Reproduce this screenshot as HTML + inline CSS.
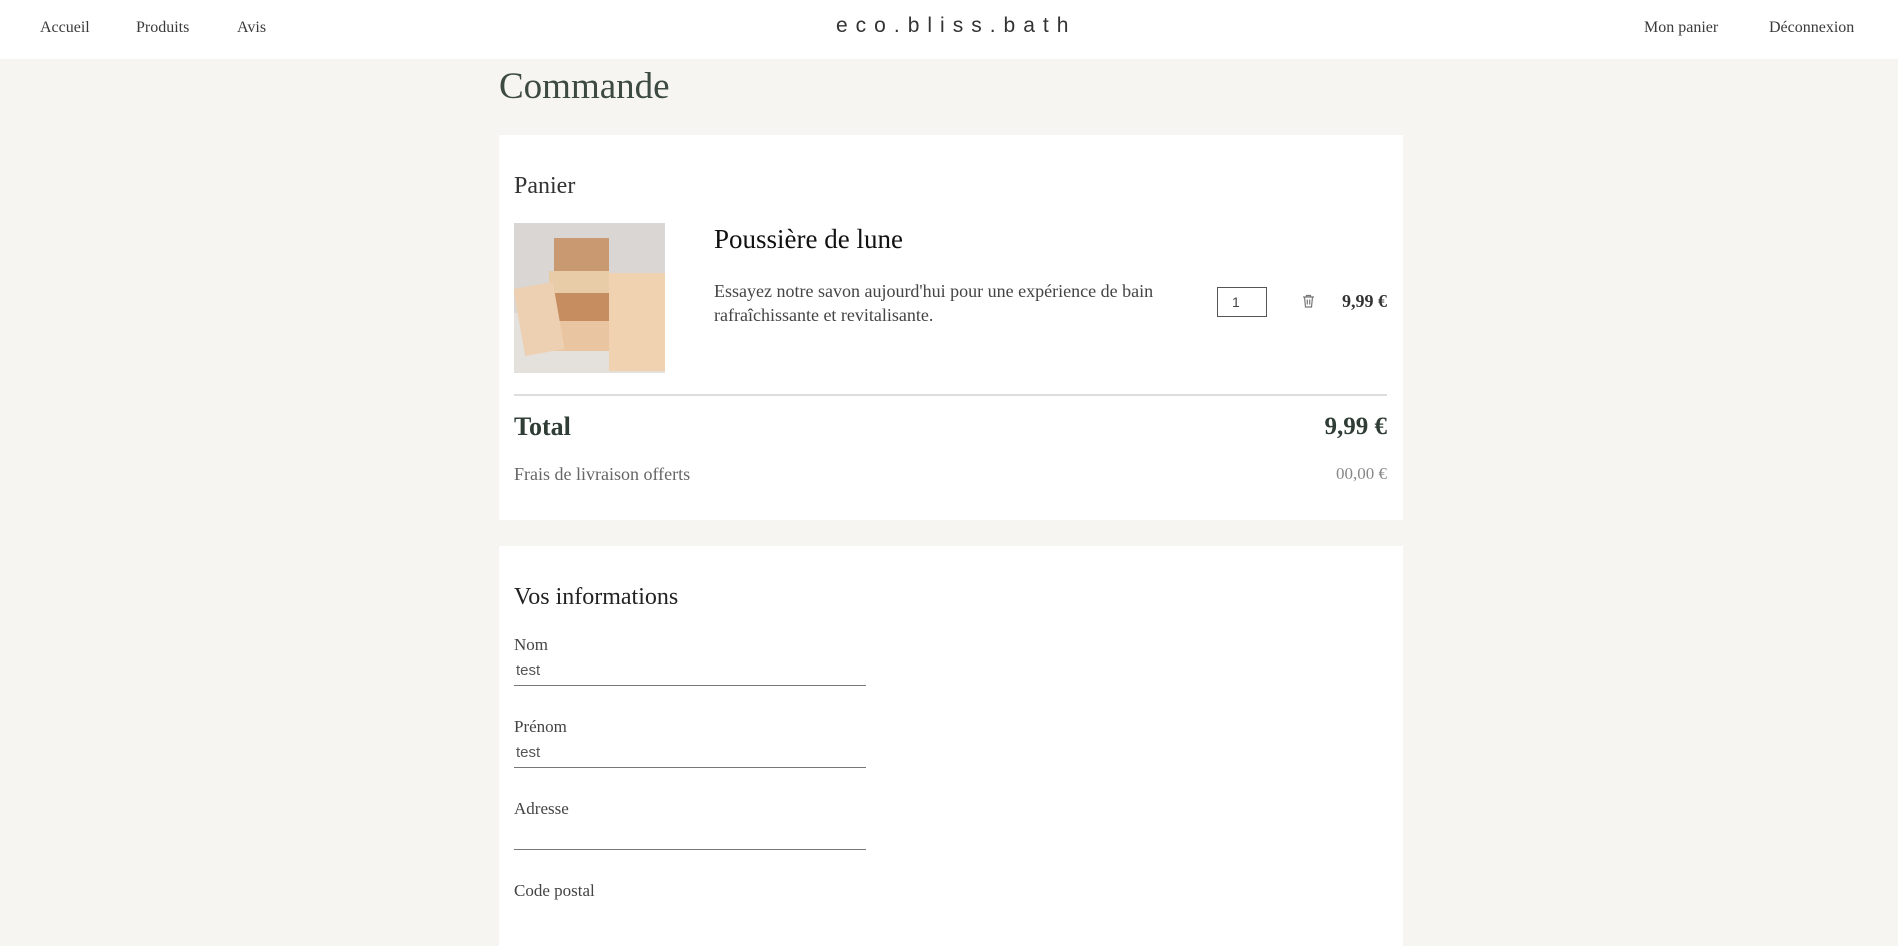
<!DOCTYPE html>
<html><head><meta charset="utf-8"><style>
*{margin:0;padding:0;box-sizing:border-box}
body{width:1898px;height:923px;overflow:hidden;background:#f7f5f2;font-family:"Liberation Serif",serif;color:#333;position:relative}
.a{position:absolute;white-space:nowrap;line-height:1}
header{position:absolute;left:0;top:0;width:1898px;height:59px;background:#fff}
.nav{font-size:16px;color:#3a3a3a;top:20px}
.card{position:absolute;left:499px;width:904px;background:#fff}
.lbl{font-size:17px;color:#444}
.val{font-family:"Liberation Sans",sans-serif;font-size:15px;color:#555}
.line{position:absolute;left:514px;width:352px;height:1px;background:#777}
</style></head><body>
<header>
<div class="a nav" style="left:40px">Accueil</div>
<div class="a nav" style="left:136px">Produits</div>
<div class="a nav" style="left:237px">Avis</div>
<div class="a" style="left:836px;top:15px;font-family:'Liberation Sans',sans-serif;font-size:21px;letter-spacing:8px;color:#333;font-weight:300">eco.bliss.bath</div>
<div class="a nav" style="left:1644px">Mon panier</div>
<div class="a nav" style="left:1769px">Déconnexion</div>
</header>
<div class="a" style="left:499px;top:68px;font-size:37px;color:#3c4a42">Commande</div>
<div class="card" style="top:135px;height:385px"></div>
<div class="a" style="left:514px;top:174px;font-size:24px;color:#333">Panier</div>
<svg class="a" style="left:514px;top:223px" width="151" height="150" viewBox="0 0 151 150">
<rect width="151" height="150" fill="#d9d6d3"/>
<rect x="0" y="90" width="151" height="60" fill="#e4e0dc"/>
<rect x="40" y="15" width="55" height="36" fill="#c99a72"/>
<rect x="35" y="48" width="60" height="28" fill="#e8cba7"/>
<rect x="30" y="70" width="68" height="32" fill="#c58d60"/>
<rect x="36" y="98" width="62" height="30" fill="#e9c5a1"/>
<rect x="5" y="62" width="40" height="68" fill="#edd0b2" transform="rotate(-10 25 96)"/>
<rect x="95" y="50" width="56" height="98" fill="#f0d2b0"/>
</svg>
<div class="a" style="left:714px;top:226px;font-size:27px;color:#111">Poussière de lune</div>
<div class="a" style="left:714px;top:279px;font-size:18px;color:#444;line-height:24px">Essayez notre savon aujourd'hui pour une expérience de bain<br>rafraîchissante et revitalisante.</div>
<div class="a" style="left:1217px;top:287px;width:50px;height:30px;border:1px solid #555;font-family:'Liberation Sans',sans-serif;font-size:14px;padding:7px 0 0 14px;color:#444">1</div>
<svg class="a" style="left:1302px;top:294px" width="13" height="14" viewBox="0 0 13 14" fill="none" stroke="#777" stroke-width="1.2"><path d="M1 3h11M4.5 3V1.5h4V3M2.5 3l1 10h6l1-10M5.3 5.5v5M7.7 5.5v5"/></svg>
<div class="a" style="right:511px;top:292px;font-size:18px;color:#333;font-weight:bold">9,99 €</div>
<div class="a" style="left:514px;top:394px;width:873px;height:2px;background:#ddd"></div>
<div class="a" style="left:514px;top:414px;font-size:26px;color:#2f3d36;font-weight:bold">Total</div>
<div class="a" style="right:511px;top:414px;font-size:25px;color:#2f3d36;font-weight:bold">9,99 €</div>
<div class="a" style="left:514px;top:465px;font-size:18px;color:#666">Frais de livraison offerts</div>
<div class="a" style="right:511px;top:465px;font-size:17px;color:#888">00,00 €</div>
<div class="card" style="top:546px;height:400px"></div>
<div class="a" style="left:514px;top:585px;font-size:24px;color:#222">Vos informations</div>
<div class="a lbl" style="left:514px;top:636px">Nom</div>
<div class="a val" style="left:516px;top:663px">test</div>
<div class="line" style="top:685px"></div>
<div class="a lbl" style="left:514px;top:718px">Prénom</div>
<div class="a val" style="left:516px;top:745px">test</div>
<div class="line" style="top:767px"></div>
<div class="a lbl" style="left:514px;top:800px">Adresse</div>
<div class="line" style="top:849px"></div>
<div class="a lbl" style="left:514px;top:882px">Code postal</div>
</body></html>
